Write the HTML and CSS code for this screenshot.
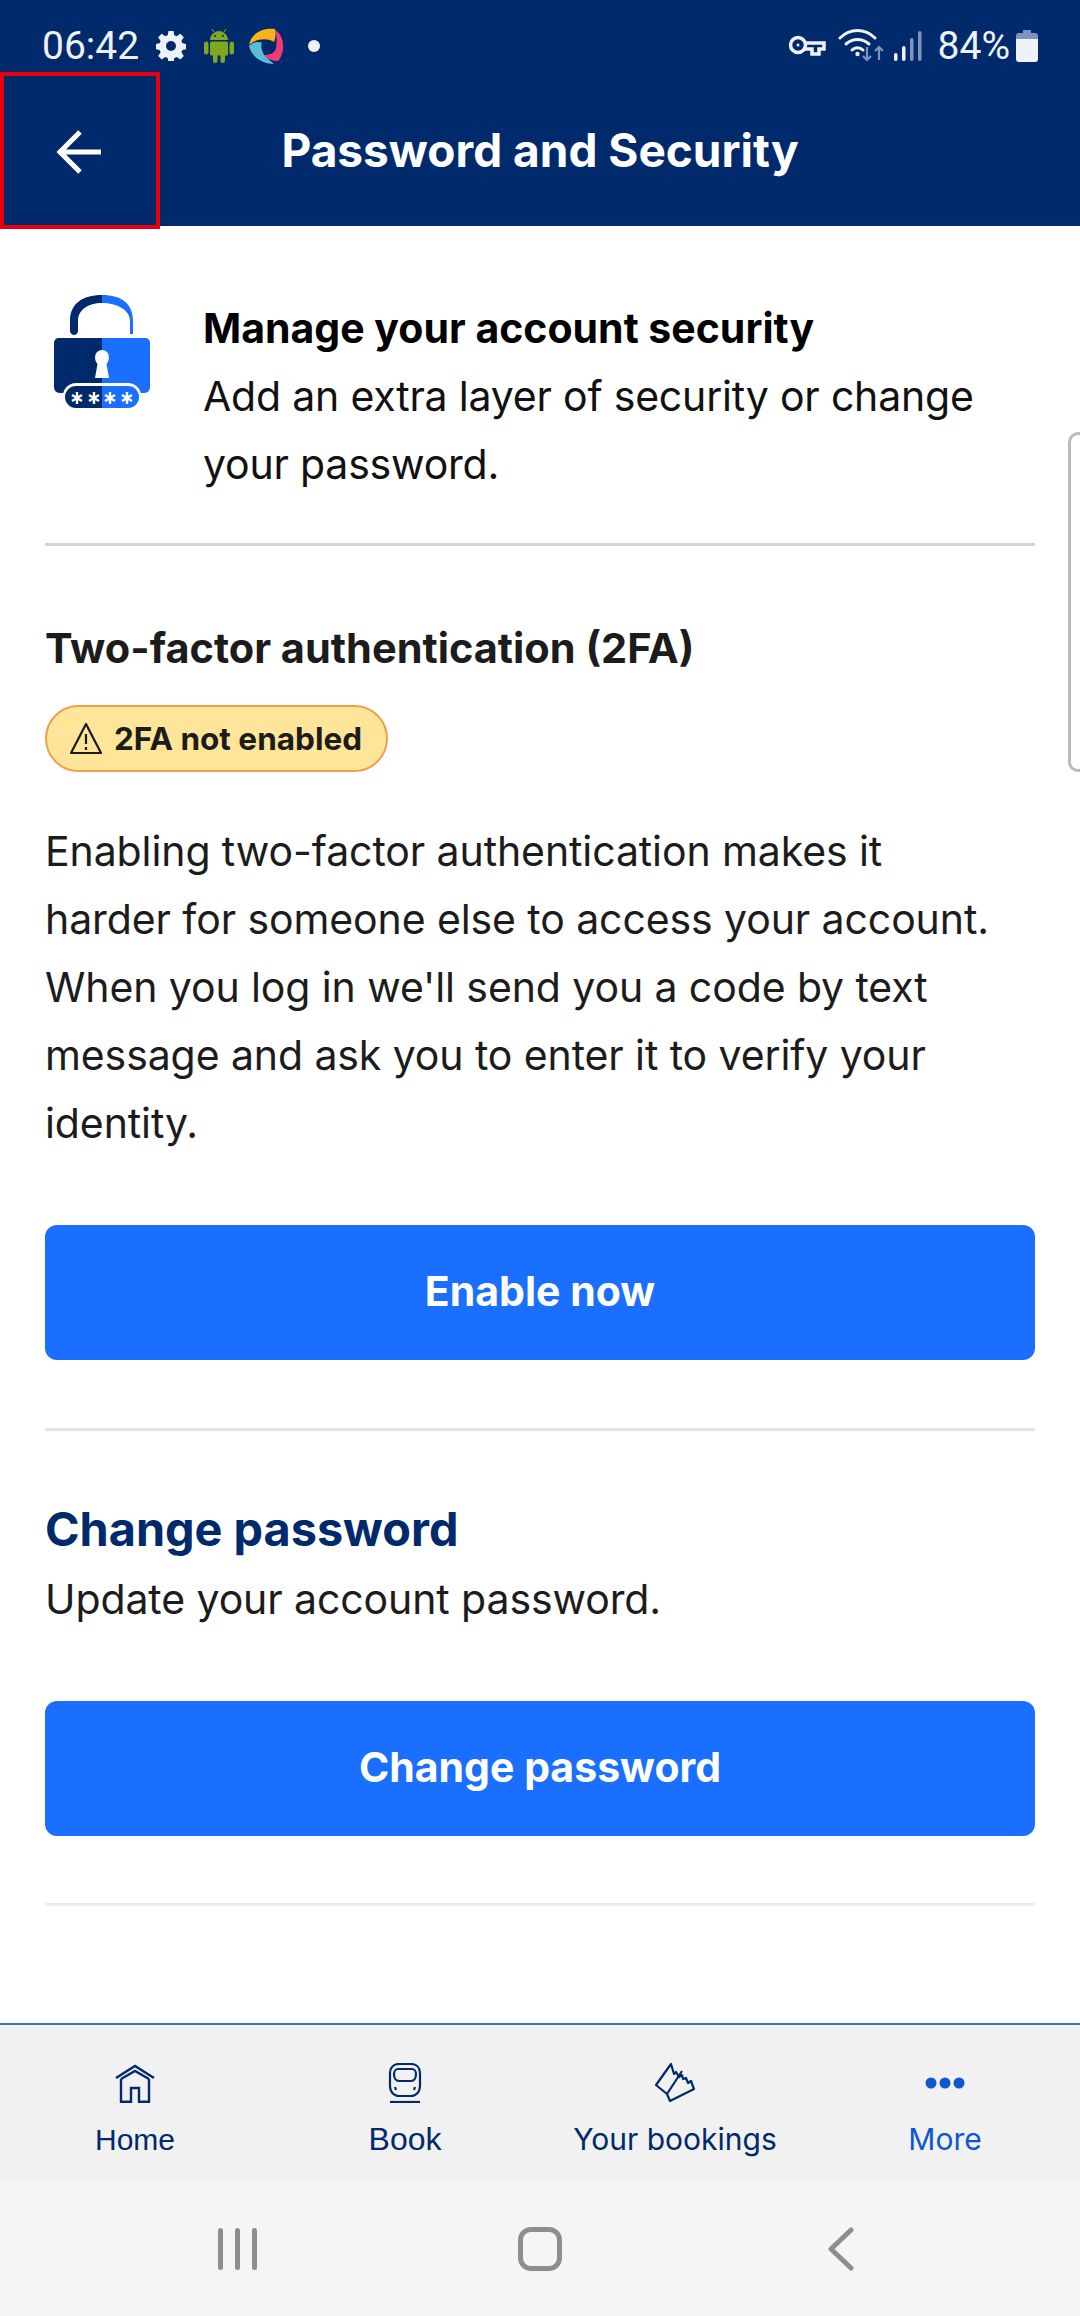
FILE: index.html
```html
<!DOCTYPE html>
<html lang="en">
<head>
<meta charset="utf-8">
<title>Password and Security</title>
<link rel="stylesheet" href="styles.css">
</head>
<body>
<div class="screen">
  <header class="top">
    <div class="status">
      <div class="status-left">
        <span class="time">06:42</span>
        <svg class="si-gear" viewBox="0 0 30 30"><path fill="#eef1f8" fill-rule="evenodd" d="M12.500 0h5l.8 4.200 2.400 1 3.600-2.400 3.500 3.500-2.400 3.600 1 2.400 4.200.8v5l-4.200.8-1 2.400 2.400 3.600-3.500 3.500-3.600-2.400-2.400 1-.8 4.200h-5l-.8-4.200-2.400-1-3.600 2.400-3.500-3.500 2.400-3.600-1-2.400-4.200-.8v-5l4.200-.8 1-2.400-2.400-3.600 3.500-3.500 3.600 2.400 2.400-1zM15 10a5 5 0 1 0 0 10 5 5 0 0 0 0-10z"/></svg>
        <svg class="si-droid" viewBox="0 0 30 34"><g fill="#7fa81e"><path d="M6 11a9 9 0 0 1 18 0z"/><rect x="6" y="12.500" width="18" height="14" rx="1.500"/><rect x="0" y="12.500" width="4.500" height="13" rx="2.200"/><rect x="25.500" y="12.500" width="4.500" height="13" rx="2.200"/><rect x="9" y="22" width="4.500" height="12" rx="2.200"/><rect x="16.500" y="22" width="4.500" height="12" rx="2.200"/></g><path stroke="#7fa81e" stroke-width="1" d="M10 3 8 0M20 3l2-3"/><circle cx="11" cy="7" r="1" fill="#002a6b"/><circle cx="19" cy="7" r="1" fill="#002a6b"/></svg>
        <svg class="si-app" viewBox="0 0 36 36"><path fill="#fbb117" d="M1 17C3 6 14-1 27 1c1 4 1 8-1 13-6-4-17-4-25 3z"/><path fill="#ef3a74" d="M27 2c6 3 9 11 8 20-1 5-3 9-5 11-5 0-11-2-14-6 6 0 11-2 12-7 1-6 1-12-1-18z"/><path fill="#5bbcd6" d="M1 18c4-4 9-5 14-3-2 5-1 10 3 14 2 2 5 4 8 7-11 0-22-6-25-18z"/><path fill="#002a6b" d="M14 14c4-2 9-1 12 1 1 4 0 8-3 11-4 0-7-1-9-4-1-3-1-5 0-8z"/></svg>
        <span class="si-dot"></span>
      </div>
      <div class="status-right">
        <svg class="si-key" viewBox="0 0 38 22"><circle cx="10" cy="10" r="7.500" fill="none" stroke="#eef1f8" stroke-width="3.500"/><circle cx="10" cy="10" r="1.500" fill="#eef1f8"/><path fill="none" stroke="#eef1f8" stroke-width="3.500" d="M17 8h19v6h-5v5h-7v-5h-7"/></svg>
        <svg class="si-wifi" viewBox="0 0 46 34"><g fill="none" stroke="#eef1f8" stroke-width="3" stroke-linecap="round"><path d="M2 9C12-1 27-1 37 9"/><path d="M8 15c7-6 16-6 23 0"/><path d="M14 21c3-3 8-3 11 0"/></g><circle cx="19.500" cy="25" r="2.200" fill="#eef1f8"/><g fill="none" stroke="#7f93bd" stroke-width="2.200"><path d="M29 18v13M25 27l4 4 4-4"/><path d="M41 31V18M37 22l4-4 4 4"/></g></svg>
        <svg class="si-signal" viewBox="0 0 28 30"><rect x="0" y="22" width="3.500" height="8" rx="1.700" fill="#eef1f8"/><rect x="8" y="15" width="3.500" height="15" rx="1.700" fill="#eef1f8"/><rect x="16" y="7" width="3.500" height="23" rx="1.700" fill="#7f93bd"/><rect x="24" y="0" width="3.500" height="30" rx="1.700" fill="#7f93bd"/></svg>
        <span class="pct">84%</span>
        <svg class="si-batt" viewBox="0 0 22 32"><path fill="#7f93bd" d="M7 0h8v3h4a3 3 0 0 1 3 3v4H0V6a3 3 0 0 1 3-3h4z"/><path fill="#eef1f8" d="M0 9h22v20a3 3 0 0 1-3 3H3a3 3 0 0 1-3-3z"/></svg>
      </div>
    </div>
    <div class="titlebar">
      <svg class="back" viewBox="0 0 46 46"><path fill="none" stroke="#fff" stroke-width="5" d="M45 23H5M24 3 4 23l20 20"/></svg>
      <h1 class="title">Password and Security</h1>
    </div>
  </header>
  <div class="focus-box"></div>

  <main class="content">
    <section class="intro">
      <svg class="lock" viewBox="0 0 96 114">
        <path fill="#002a6b" d="M48 0C28 0 16 9 16 26v10c0 2 2 4 4 4s4-2 4-4V26C24 15 34 8 48 8z"/>
        <path fill="#1a6fff" d="M48 0c20 0 31 9 31 26v13h-3V26C76 15 63 8 48 8z"/>
        <path fill="#002a6b" d="M5 43h43v55H6c-4 0-6-3-6-6V48c0-3 2-5 5-5z"/>
        <path fill="#1a6fff" d="M48 43h43c3 0 5 2 5 5v44c0 3-2 6-6 6H48z"/>
        <path fill="#fff" d="M48 55a7 7 0 0 1 7 7c0 3-1 5-2.500 7l2.500 14H41l2.500-14c-1.500-2-2.500-4-2.500-7a7 7 0 0 1 7-7z"/>
        <rect x="9" y="88" width="78" height="26" rx="13" fill="#fff"/>
        <path fill="#002a6b" d="M48 91H22a11 11 0 0 0 0 22h26z"/>
        <path fill="#1a6fff" d="M48 91h26a11 11 0 0 1 0 22H48z"/>
        <g stroke="#fff" stroke-width="2.400"><path d="M23 97v12M18 100l10 6M28 100l-10 6"/><path d="M40 97v12M35 100l10 6M45 100l-10 6"/><path d="M56 97v12M51 100l10 6M61 100l-10 6"/><path d="M73 97v12M68 100l10 6M78 100l-10 6"/></g>
      </svg>
      <div class="intro-text">
        <h2 class="intro-title">Manage your account security</h2>
        <p class="intro-copy">Add an extra layer of security or change your password.</p>
      </div>
    </section>
    <hr class="rule rule-a">
    <section class="tfa">
      <h2 class="sec-title">Two-factor authentication (2FA)</h2>
      <div class="badge">
        <svg class="warn" viewBox="0 0 34 34"><path fill="none" stroke="#1c1c1c" stroke-width="2.200" stroke-linejoin="round" d="M17 2 32 31H2z"/><path stroke="#1c1c1c" stroke-width="2.200" d="M17 12v10M17 25v3"/></svg>
        <span>2FA not enabled</span>
      </div>
      <p class="body">Enabling two-factor authentication makes it<br>harder for someone else to access your account.<br>When you log in we'll send you a code by text<br>message and ask you to enter it to verify your<br>identity.</p>
      <button class="cta cta-first">Enable now</button>
    </section>
    <hr class="rule rule-b">
    <section class="pw">
      <h2 class="pw-title">Change password</h2>
      <p class="body pw-copy">Update your account password.</p>
      <button class="cta">Change password</button>
    </section>
    <hr class="rule rule-c">
  </main>

  <div class="scroll-handle"></div>

  <nav class="tabs">
    <a class="tab tab-home">
      <svg class="tab-ico" viewBox="0 0 40 40"><g fill="none" stroke="#002a6b" stroke-width="2.400"><path d="M1 15 20 3l19 12"/><path d="M6 16 20 8l14 8"/><path d="M6 16v23h10V25h8v14h10V16"/><path d="M6 39h10M24 39h10"/></g></svg>
      <span>Home</span>
    </a>
    <a class="tab tab-book">
      <svg class="tab-ico" viewBox="0 0 40 40"><g fill="none" stroke="#002a6b" stroke-width="2.200"><path d="M14 1h12c6 0 9 4 9 9v13c0 6-4 10-9 10H14c-5 0-9-4-9-10V10c0-5 3-9 9-9z"/><path d="M13 6h14c2 0 4 2 4 5 0 4-2 7-5 7H14c-3 0-5-3-5-7 0-3 2-5 4-5z"/><path d="M10 24l1 3M30 24l-1 3"/><path d="M5 39h30"/></g></svg>
      <span>Book</span>
    </a>
    <a class="tab">
      <svg class="tab-ico" viewBox="0 0 40 40"><g fill="none" stroke="#002a6b" stroke-width="2.200" stroke-linejoin="round"><path d="M16 1 1 22l11 9 3 7 24-12-3-8-3 2-2-5-3 1-1-4-3 2-3-5-2 2z"/><path d="M27 8 12 31"/></g></svg>
      <span>Your bookings</span>
    </a>
    <a class="tab tab-more">
      <svg class="tab-ico" viewBox="0 0 40 40"><g fill="#0d57d0"><circle cx="6" cy="20" r="5.500"/><circle cx="20" cy="20" r="5.500"/><circle cx="34" cy="20" r="5.500"/></g></svg>
      <span>More</span>
    </a>
  </nav>
  <div class="sysnav">
    <svg class="sys-recent" viewBox="0 0 40 42"><g fill="#8e8e8e"><rect x="0" y="0" width="5" height="42" rx="2.500"/><rect x="17" y="0" width="5" height="42" rx="2.500"/><rect x="34" y="0" width="5" height="42" rx="2.500"/></g></svg>
    <span class="sys-home"></span>
    <svg class="sys-back" viewBox="0 0 26 44"><path fill="none" stroke="#8e8e8e" stroke-width="5" stroke-linecap="round" stroke-linejoin="round" d="M23 3 3 22l20 19"/></svg>
  </div>
</div>
</body>
</html>
```

FILE: styles.css
```css
* { box-sizing: border-box; }
html, body { margin: 0; padding: 0; }
body { width: 1080px; height: 2316px; overflow: hidden; background: #fff; font-family: Inter, "Liberation Sans", sans-serif; color: #1c1c1c; }
.screen { position: relative; width: 1080px; height: 2316px; display: flex; flex-direction: column; }
h1, h2, p { margin: 0; }

.top { background: #002a6b; height: 226px; flex: none; }
.status { height: 92px; display: flex; justify-content: space-between; align-items: center; padding: 0 42px 0 42px; color: #eef1f8; }
.status-left, .status-right { display: flex; align-items: center; }
.time { font-family: Roboto, sans-serif; font-size: 39px; width: 94px; }
.si-gear { width: 30px; height: 30px; margin-left: 20px; }
.si-droid { width: 30px; height: 34px; margin-left: 18px; }
.si-app { width: 36px; height: 36px; margin-left: 14px; }
.si-dot { width: 12px; height: 12px; border-radius: 50%; background: #eef1f8; margin-left: 24px; }
.si-key { width: 38px; height: 22px; }
.si-wifi { width: 46px; height: 34px; margin-left: 12px; }
.si-signal { width: 28px; height: 30px; margin-left: 10px; }
.pct { font-family: Roboto, sans-serif; font-size: 39px; margin-left: 16px; }
.si-batt { width: 22px; height: 32px; margin-left: 6px; }

.titlebar { position: relative; height: 134px; padding-bottom: 18px; display: flex; align-items: center; justify-content: center; }
.back { position: absolute; left: 56px; top: 37px; width: 46px; height: 46px; }
.title { font-size: 46px; font-weight: 700; color: #fff; }
.focus-box { position: absolute; left: 0; top: 72px; width: 160px; height: 157px; border: 4px solid #e8000d; }

.content { flex: 1; padding: 0 45px; }
.intro { display: flex; padding: 69px 0 0 9px; height: 317px; }
.lock { width: 96px; height: 114px; flex: none; }
.intro-text { margin-left: 53px; }
.intro-title { font-size: 41px; font-weight: 700; color: #000; line-height: 67px; }
.intro-copy { font-size: 41px; line-height: 68px; color: #111; letter-spacing: -0.2px; }
.rule { border: 0; margin: 0; height: 3px; }
.rule-a { background: #d4d4d4; }
.rule-b { background: #e2e2e2; margin-top: 68px; }
.rule-c { background: #ebebeb; margin-top: 67px; }
.tfa { padding-top: 70px; }
.sec-title { font-size: 41.500px; font-weight: 700; line-height: 64px; color: #1c1c1c; }
.badge { display: inline-flex; align-items: center; margin-top: 25px; height: 67px; padding: 0 24px 0 22px; border: 2px solid #f0a04b; border-radius: 34px; background: #fee599; font-size: 31.500px; font-weight: 700; }
.warn { width: 34px; height: 34px; margin-right: 11px; }
.body { font-size: 41px; line-height: 68px; color: #1c1c1c; letter-spacing: -0.1px; }
.tfa .body { margin-top: 45px; }
.cta { display: block; width: 100%; height: 135px; margin-top: 68px; padding: 0 0 3px; border: 0; border-radius: 12px; background: #1a6fff; color: #fff; font-family: inherit; font-size: 41px; font-weight: 700; }
.pw { padding-top: 63px; }
.pw-title { font-size: 46.800px; font-weight: 700; color: #002a6b; line-height: 71px; }
.pw-copy { line-height: 68px; }

.scroll-handle { position: absolute; left: 1068px; top: 432px; width: 20px; height: 340px; border: 3px solid #bbb; border-radius: 14px; }

.tabs { flex: none; height: 158px; border-top: 2px solid #3f74b5; background: #f1f1f1; display: grid; grid-template-columns: repeat(4, 1fr); }
.tab { display: flex; flex-direction: column; align-items: center; padding-top: 38px; color: #002a6b; font-size: 30px; }
.tab-ico { width: 40px; height: 40px; margin-bottom: 18px; }
.tab-home { font-family: "Liberation Sans", sans-serif; font-size: 30px; }
.tab-book { font-family: "Liberation Sans", sans-serif; font-size: 32px; }
.tab-home .tab-ico { margin-bottom: 20px; }
.tab-more { color: #0d57d0; }
.sysnav { flex: none; height: 135px; background: #f5f5f5; display: flex; align-items: center; padding-left: 218px; }
.sys-recent { width: 40px; height: 42px; }
.sys-home { width: 44px; height: 44px; margin-left: 260px; border: 5px solid #8e8e8e; border-radius: 13px; }
.sys-back { width: 26px; height: 44px; margin-left: 266px; }
```
